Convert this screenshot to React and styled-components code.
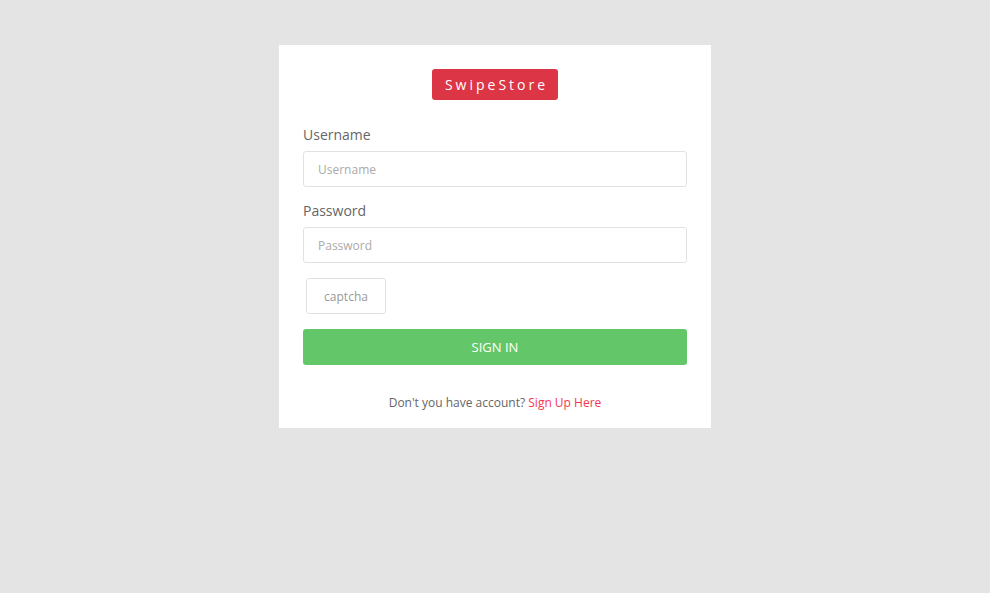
import React from 'react';
import styled, { createGlobalStyle } from 'styled-components';

const GlobalStyle = createGlobalStyle`
  html, body {
    margin: 0;
    padding: 0;
    background: #e4e4e4;
    font-family: "Open Sans", "Noto Sans", sans-serif;
  }
`;

const Page = styled.div`
  min-height: 593px;
  display: flex;
  justify-content: center;
  align-items: flex-start;
  padding-top: 45px;
  box-sizing: border-box;
`;

const Card = styled.form`
  width: 432px;
  box-sizing: border-box;
  background: #fff;
  padding: 24px 24px 16px;
  display: flex;
  flex-direction: column;
`;

const Brand = styled.div`
  align-self: center;
  background: #dc3545;
  color: #fff;
  border-radius: 3px;
  height: 31px;
  padding: 0 10px 0 13px;
  display: flex;
  align-items: center;
  font-size: 14px;
  letter-spacing: 3px;
  margin-bottom: 25px;
`;

const Field = styled.div`
  display: flex;
  flex-direction: column;
  gap: 6px;
  margin-bottom: 14px;
`;

const Label = styled.label`
  font-size: 14px;
  color: #666;
  line-height: 20px;
`;

const Input = styled.input`
  height: 36px;
  box-sizing: border-box;
  border: 1px solid #e2e2e2;
  border-radius: 3px;
  padding: 0 14px;
  font-family: inherit;
  font-size: 12px;
  color: #555;
  outline: none;
  &::placeholder {
    color: #aaa;
  }
`;

const Captcha = styled.div`
  align-self: flex-start;
  margin: 1px 0 15px 3px;
  width: 80px;
  height: 36px;
  box-sizing: border-box;
  border: 1px solid #e2e2e2;
  border-radius: 3px;
  display: flex;
  align-items: center;
  justify-content: center;
  font-size: 12px;
  color: #999;
`;

const SubmitButton = styled.button`
  height: 36px;
  border: none;
  border-radius: 3px;
  background: #63c76a;
  color: #fff;
  font-family: inherit;
  font-size: 13px;
  text-transform: uppercase;
  cursor: pointer;
`;

const Footer = styled.p`
  margin: 29px 0 0;
  text-align: center;
  font-size: 12px;
  color: #666;
  line-height: 18px;
`;

const SignUpLink = styled.a`
  color: #f5364f;
  text-decoration: none;
`;

export default function App() {
  return (
    <>
      <GlobalStyle />
      <Page>
        <Card onSubmit={(e) => e.preventDefault()}>
          <Brand>SwipeStore</Brand>
          <Field>
            <Label htmlFor="username">Username</Label>
            <Input id="username" placeholder="Username" />
          </Field>
          <Field>
            <Label htmlFor="password">Password</Label>
            <Input id="password" type="password" placeholder="Password" />
          </Field>
          <Captcha>captcha</Captcha>
          <SubmitButton type="submit">Sign in</SubmitButton>
          <Footer>
            Don't you have account? <SignUpLink href="#">Sign Up Here</SignUpLink>
          </Footer>
        </Card>
      </Page>
    </>
  );
}
